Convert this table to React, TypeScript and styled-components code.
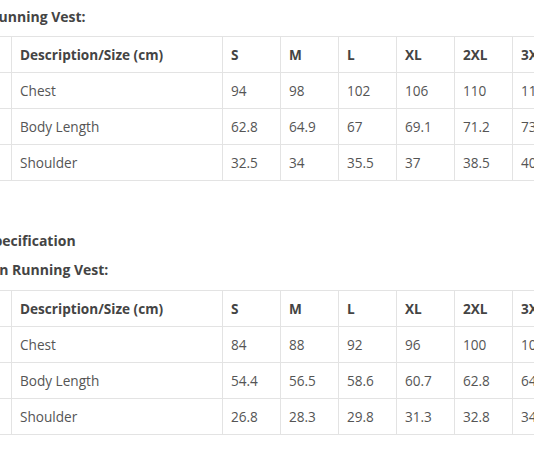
import React from "react";
import styled, { createGlobalStyle } from "styled-components";

const Global = createGlobalStyle`
  html, body { margin: 0; padding: 0; background: #fff; overflow: hidden; }
  body { font-family: "Open Sans", "Liberation Sans", sans-serif; color: #555; }
`;

const Page = styled.div`
  margin-left: -41px;
  width: 620px;
`;

const Heading = styled.h4<{ $top: number; $bottom: number; $shift?: number }>`
  margin: ${(p) => p.$top}px 0 ${(p) => p.$bottom}px ${(p) => p.$shift ?? 0}px;
  font-size: 14px;
  line-height: 20px;
  font-weight: 700;
  color: #444;
`;

const Table = styled.table`
  border-collapse: collapse;
  table-layout: fixed;
  width: 621px;
`;

const Row = styled.tr`
  height: 36px;
`;

const Cell = styled.td<{ $head?: boolean }>`
  border: 1px solid #e3e3e3;
  padding: 0 8px;
  font-size: 13.6px;
  line-height: 20px;
  font-weight: ${(p) => (p.$head ? 700 : 400)};
  color: ${(p) => (p.$head ? "#444" : "#555")};
  white-space: nowrap;
  overflow: hidden;
`;

const sizes = ["S", "M", "L", "XL", "2XL", "3XL"];
const widths = [52, 211, 58, 58, 58, 58, 58, 68];

type Data = { label: string; values: string[] }[];

const men: Data = [
  { label: "Chest", values: ["94", "98", "102", "106", "110", "114"] },
  { label: "Body Length", values: ["62.8", "64.9", "67", "69.1", "71.2", "73.3"] },
  { label: "Shoulder", values: ["32.5", "34", "35.5", "37", "38.5", "40"] },
];

const women: Data = [
  { label: "Chest", values: ["84", "88", "92", "96", "100", "104"] },
  { label: "Body Length", values: ["54.4", "56.5", "58.6", "60.7", "62.8", "64.9"] },
  { label: "Shoulder", values: ["26.8", "28.3", "29.8", "31.3", "32.8", "34.3"] },
];

function SizeTable({ data }: { data: Data }) {
  return (
    <Table>
      <colgroup>
        {widths.map((w, i) => (
          <col key={i} style={{ width: w }} />
        ))}
      </colgroup>
      <tbody>
        <Row>
          <Cell $head>#</Cell>
          <Cell $head>Description/Size (cm)</Cell>
          {sizes.map((s) => (
            <Cell $head key={s}>{s}</Cell>
          ))}
        </Row>
        {data.map((r, i) => (
          <Row key={r.label}>
            <Cell>{i + 1}</Cell>
            <Cell>{r.label}</Cell>
            {r.values.map((v, j) => (
              <Cell key={j}>{v}</Cell>
            ))}
          </Row>
        ))}
      </tbody>
    </Table>
  );
}

export default function App() {
  return (
    <Page>
      <Global />
      <Heading $top={7} $bottom={9} $shift={-4}>Men Running Vest:</Heading>
      <SizeTable data={men} />
      <Heading $top={50} $bottom={9} $shift={-4}>Size Specification</Heading>
      <Heading $top={0} $bottom={10} $shift={-4}>Women Running Vest:</Heading>
      <SizeTable data={women} />
    </Page>
  );
}
